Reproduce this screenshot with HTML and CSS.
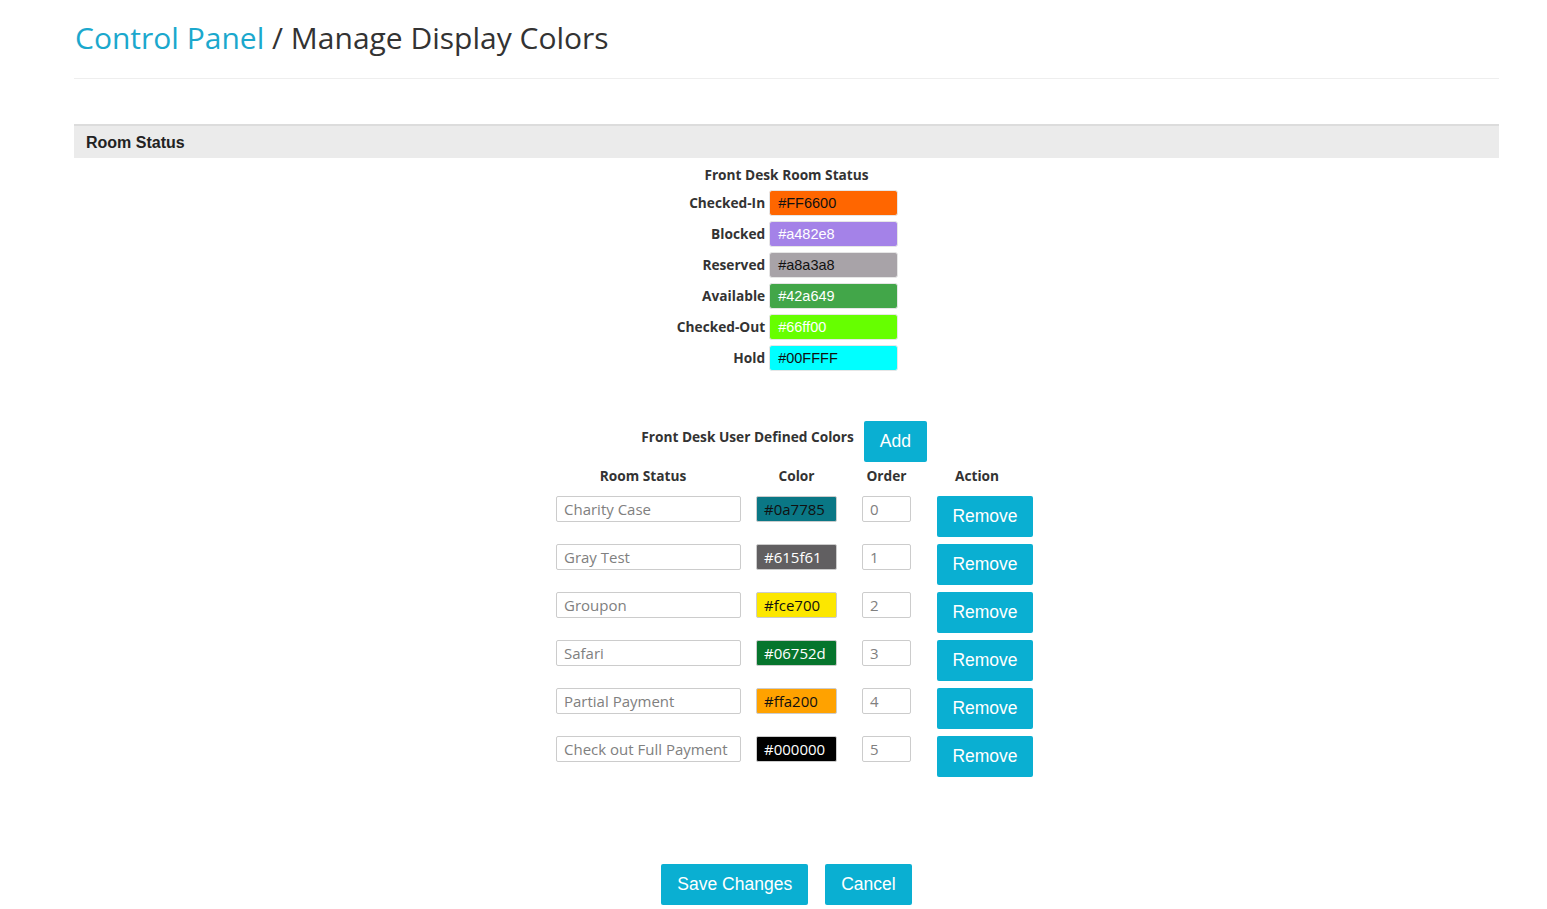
FILE: index.html
```html
<!DOCTYPE html>
<html>
<head>
<meta charset="utf-8">
<link rel="stylesheet" href="styles.css">
</head>
<body>
<div class="page">
  <h1 class="title"><span class="crumb">Control Panel</span> / Manage Display Colors</h1>
  <div class="band">Room Status</div>

  <div class="fixed">
    <div class="fixed-title">Front Desk Room Status</div>
    <div class="fixed-grid">
      <div class="lbl">Checked-In</div><div class="sw dark" style="background:#FF6600">#FF6600</div>
      <div class="lbl">Blocked</div><div class="sw light" style="background:#a482e8">#a482e8</div>
      <div class="lbl">Reserved</div><div class="sw dark" style="background:#a8a3a8">#a8a3a8</div>
      <div class="lbl">Available</div><div class="sw light" style="background:#42a649">#42a649</div>
      <div class="lbl">Checked-Out</div><div class="sw light" style="background:#66ff00">#66ff00</div>
      <div class="lbl">Hold</div><div class="sw dark" style="background:#00FFFF">#00FFFF</div>
    </div>
  </div>

  <div class="user">
    <div class="user-head">
      <span class="user-title">Front Desk User Defined Colors</span>
      <button class="btn add">Add</button>
    </div>
    <div class="utable">
      <div class="th th1">Room Status</div>
      <div class="th th2">Color</div>
      <div class="th th3">Order</div>
      <div class="th th4">Action</div>

      <div class="inp name">Charity Case</div>
      <div class="inp col dark" style="background:#0a7785">#0a7785</div>
      <div class="inp ord">0</div>
      <button class="btn rm">Remove</button>

      <div class="inp name">Gray Test</div>
      <div class="inp col light" style="background:#615f61">#615f61</div>
      <div class="inp ord">1</div>
      <button class="btn rm">Remove</button>

      <div class="inp name">Groupon</div>
      <div class="inp col dark" style="background:#fce700">#fce700</div>
      <div class="inp ord">2</div>
      <button class="btn rm">Remove</button>

      <div class="inp name">Safari</div>
      <div class="inp col light" style="background:#06752d">#06752d</div>
      <div class="inp ord">3</div>
      <button class="btn rm">Remove</button>

      <div class="inp name">Partial Payment</div>
      <div class="inp col dark" style="background:#ffa200">#ffa200</div>
      <div class="inp ord">4</div>
      <button class="btn rm">Remove</button>

      <div class="inp name">Check out Full Payment</div>
      <div class="inp col light" style="background:#000000">#000000</div>
      <div class="inp ord">5</div>
      <button class="btn rm">Remove</button>
    </div>
  </div>

  <div class="actions">
    <button class="btn big">Save Changes</button>
    <button class="btn big">Cancel</button>
  </div>
</div>
</body>
</html>
```

FILE: styles.css
```css
html, body {
  margin: 0;
  padding: 0;
  background: #fff;
}
body {
  font-family: "Open Sans", "Liberation Sans", sans-serif;
  color: #333;
}
.page {
  padding: 0 48px 0 74px;
}
.title {
  margin: 0;
  padding: 21px 0 0 1px;
  height: 57px;
  font-weight: 400;
  font-size: 30px;
  line-height: 34px;
  color: #333;
  border-bottom: 1px solid #eee;
}
.crumb {
  color: #1ba8cd;
}
.band {
  margin-top: 45px;
  height: 32px;
  border-top: 2px solid #dcdcdc;
  background: #ebebeb;
  font-family: "Liberation Sans", Arial, sans-serif;
  font-weight: 700;
  font-size: 16px;
  line-height: 34px;
  padding-left: 12px;
  color: #222;
}
.fixed {
  display: flex;
  flex-direction: column;
  align-items: center;
  margin-top: 8px;
}
.fixed-title {
  font-weight: 700;
  font-size: 13.7px;
  line-height: 18px;
  color: #333;
  margin-bottom: 6px;
}
.fixed-grid {
  display: grid;
  grid-template-columns: auto 129px;
  column-gap: 4px;
  row-gap: 5px;
  grid-auto-rows: 26px;
  padding-left: 2px;
}
.lbl {
  text-align: right;
  font-weight: 700;
  font-size: 13.7px;
  line-height: 26px;
  color: #333;
}
.sw {
  box-sizing: border-box;
  border: 1px solid #e6e6e6;
  border-radius: 3px;
  padding-left: 8px;
  font-family: "Liberation Sans", Arial, sans-serif;
  font-size: 14.5px;
  line-height: 24px;
}
.dark { color: #111; }
.light { color: #fff; }
.user {
  margin-top: 50px;
  display: flex;
  flex-direction: column;
  align-items: center;
}
.user-head {
  display: flex;
  align-items: center;
  gap: 10px;
  margin-left: -5px;
}
.user-title {
  font-weight: 700;
  font-size: 13.7px;
  line-height: 18px;
  color: #333;
  margin-top: -9px;
}
.btn {
  border: 0;
  border-radius: 2px;
  background: #0aafd2;
  color: #fff;
  font-family: "Liberation Sans", Arial, sans-serif;
  font-size: 17.5px;
  height: 41px;
  padding: 0;
  cursor: pointer;
}
.add {
  width: 63px;
}
.utable {
  margin-top: 5px;
  margin-left: 16px;
  display: grid;
  grid-template-columns: 185px 96px 74px 122px;
  grid-template-rows: 22px;
  grid-auto-rows: 41px;
  row-gap: 7px;
}
.utable > :nth-child(4n+2) { margin-left: 15px; }
.utable > :nth-child(4n+3) { margin-left: 25px; }
.utable > :nth-child(4n+4) { margin-left: 26px; }
.utable > .th {
  grid-row: 1;
  margin-left: 0;
  font-weight: 700;
  font-size: 13.7px;
  line-height: 18px;
  text-align: center;
  align-self: start;
  color: #333;
  height: 18px;
}
.th1 { padding-right: 11px; }
.th2 { padding-left: 15px; }
.th3 { padding-left: 25px; }
.th4 { padding-left: 10px; }
.inp {
  box-sizing: border-box;
  height: 26px;
  border: 1px solid #ccc;
  border-radius: 2px;
  padding-left: 7px;
  font-size: 15px;
  line-height: 24px;
  white-space: nowrap;
  overflow: hidden;
  align-self: start;
}
.name, .ord {
  color: #808080;
  background: #fff;
}
.rm {
  align-self: start;
}
.actions {
  display: flex;
  justify-content: center;
  gap: 17px;
  margin-top: 87px;
}
.big {
  padding: 0 16px;
}
```
